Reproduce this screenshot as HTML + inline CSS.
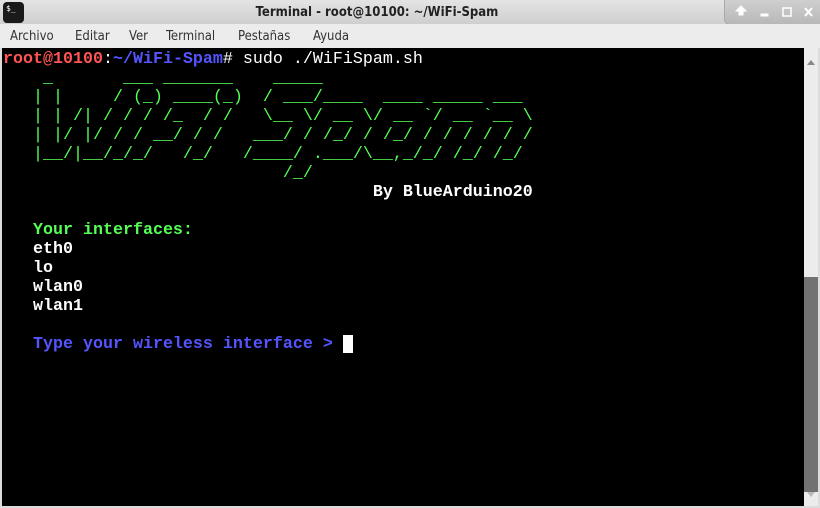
<!DOCTYPE html>
<html><head><meta charset="utf-8"><style>
*{margin:0;padding:0;box-sizing:border-box}
body{width:820px;height:508px;overflow:hidden;background:#dcdcdc;font-family:"Liberation Sans","DejaVu Sans",sans-serif;position:relative}
#title{position:absolute;left:0;top:0;width:820px;height:24px;padding-right:66px;background:linear-gradient(#e4e4e4,#cfcfcf);text-align:center;font-size:13px;font-weight:bold;line-height:26px;color:#222;font-family:"DejaVu Sans Condensed","DejaVu Sans",sans-serif}
#icon{position:absolute;left:3px;top:2px;width:21px;height:21px;background:#1a1a1a;border-radius:4px;color:#fff;font-size:8px;font-weight:normal;line-height:10px;text-align:left;padding:2px 3px;font-family:"DejaVu Sans Mono",monospace}
#btns{position:absolute;left:724px;top:0;width:96px;height:25px;background:linear-gradient(#cfcfcf,#b8b8b8);border-bottom-left-radius:6px;border-left:1px solid #aaa;border-bottom:1px solid #aaa}
#menu{position:absolute;left:0;top:24px;width:820px;height:24px;background:#ececec;font-size:13px;line-height:24px;color:#333;font-family:"DejaVu Sans Condensed","DejaVu Sans",sans-serif}
#menu span{position:absolute;top:1px}
#term{position:absolute;left:2px;top:48px;width:802px;height:458px;background:#000}
pre{position:absolute;left:1px;top:2px;font-family:"Liberation Mono","DejaVu Sans Mono",monospace;font-size:16.67px;line-height:19px;font-weight:bold;color:#fff;white-space:pre}
.r{color:#ff5555}.b{color:#5555ff}.g{color:#55ff55}.w{color:#fff}
.n{font-weight:normal}
#sb{position:absolute;left:804px;top:48px;width:14px;height:458px;background:#ececec}
#thumb{position:absolute;left:0;top:229px;width:14px;height:215px;background:#727272}
#cur{position:absolute;left:341px;top:287px;width:10px;height:18px;background:#fff}
</style></head><body>
<div id="title">Terminal - root@10100: ~/WiFi-Spam<div id="icon">$_</div>
<div id="btns"><svg width="96" height="25"><g fill="#fff" stroke="#fff">
<path d="M14 15v-4h-3l5-5 5 5h-3v4z" stroke-width="1"/>
<rect x="36" y="14" width="7" height="2"/>
<rect x="58" y="8" width="8" height="8" fill="none" stroke-width="1.5"/>
<path d="M80 8l7 8M87 8l-7 8" stroke-width="2"/></g></svg></div></div>
<div id="menu"><span style="left:10px">Archivo</span><span style="left:75px">Editar</span><span style="left:129px">Ver</span><span style="left:166px">Terminal</span><span style="left:238px">Pestañas</span><span style="left:313px">Ayuda</span></div>
<div id="term">
<pre><span class="r">root@10100</span><span class="n">:</span><span class="b">~/WiFi-Spam</span><span class="n"># sudo ./WiFiSpam.sh</span>
<span class="g n">    _       ___ _______    _____
   | |     / (_) ____(_)  / ___/____  ____ _____ ___
   | | /| / / / /_  / /   \__ \/ __ \/ __ `/ __ `__ \
   | |/ |/ / / __/ / /   ___/ / /_/ / /_/ / / / / / /
   |__/|__/_/_/   /_/   /____/ .___/\__,_/_/ /_/ /_/
                            /_/</span>
                                     By BlueArduino20

   <span class="g">Your interfaces:</span>
   eth0
   lo
   wlan0
   wlan1

   <span class="b">Type your wireless interface &gt;</span></pre>
<div id="cur"></div>
</div>
<div id="sb"><div id="thumb"></div>
<svg width="14" height="458" style="position:absolute;left:0;top:0"><path d="M3 17l4-5 4 5z" fill="#888"/><path d="M3 444l4 5 4-5z" fill="#bbb"/></svg></div>
</body></html>
